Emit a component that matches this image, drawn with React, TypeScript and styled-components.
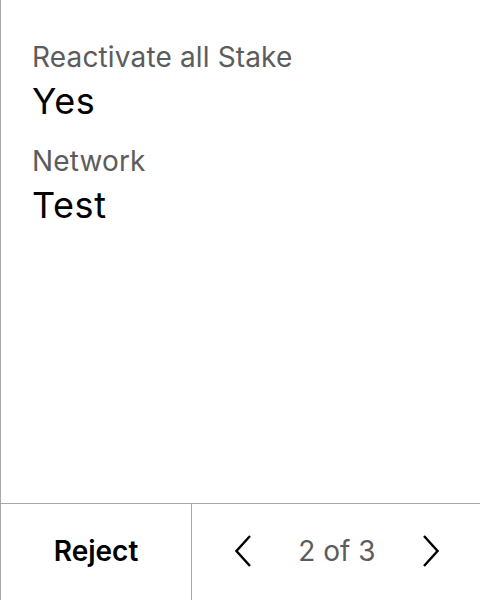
import React from "react";
import styled, { createGlobalStyle } from "styled-components";

const Global = createGlobalStyle`
  html, body { margin: 0; padding: 0; background: #fff; }
  body { font-family: Inter, "Noto Sans", sans-serif; }
`;

const Screen = styled.div`
  width: 480px;
  height: 600px;
  box-sizing: border-box;
  border-left: 1px solid #a8a8a8;
  display: flex;
  flex-direction: column;
  background: #fff;
`;

const Content = styled.div`
  flex: 1;
  padding: 39px 0 0 31px;
  display: flex;
  flex-direction: column;
  gap: 20px;
`;

const Field = styled.div`
  display: flex;
  flex-direction: column;
  gap: 4px;
`;

const Label = styled.div`
  font-size: 28px;
  line-height: 36px;
  letter-spacing: 0.15px;
  color: #5c5c5c;
`;

const Value = styled.div`
  font-size: 36px;
  line-height: 44px;
  letter-spacing: 0.6px;
  color: #000;
`;

const Footer = styled.div`
  height: 96px;
  border-top: 1px solid #a8a8a8;
  display: grid;
  grid-template-columns: 191px 1fr;
`;

const RejectButton = styled.button`
  border: none;
  border-right: 1px solid #a8a8a8;
  background: none;
  font-family: inherit;
  font-size: 28px;
  font-weight: 600;
  color: #000;
  padding: 0 0 2px 0;
`;

const Pager = styled.div`
  display: flex;
  align-items: center;
  justify-content: space-between;
  padding: 0 41px 2px 43px;
`;

const Arrow = styled.button`
  border: none;
  background: none;
  padding: 0;
  width: 16px;
  height: 32px;
  display: flex;
`;

const PageText = styled.span`
  font-size: 28px;
  color: #5c5c5c;
`;

const Chevron = ({ dir }: { dir: "left" | "right" }) => (
  <svg width="16" height="32" viewBox="0 0 16 32" fill="none">
    <path
      d={dir === "left" ? "M15 1 L1.5 16 L15 31" : "M1 1 L14.5 16 L1 31"}
      stroke="#000"
      strokeWidth="2.4"
    />
  </svg>
);

export default function App() {
  return (
    <>
      <Global />
      <Screen>
        <Content>
          <Field>
            <Label>Reactivate all Stake</Label>
            <Value>Yes</Value>
          </Field>
          <Field>
            <Label>Network</Label>
            <Value>Test</Value>
          </Field>
        </Content>
        <Footer>
          <RejectButton>Reject</RejectButton>
          <Pager>
            <Arrow><Chevron dir="left" /></Arrow>
            <PageText>2 of 3</PageText>
            <Arrow><Chevron dir="right" /></Arrow>
          </Pager>
        </Footer>
      </Screen>
    </>
  );
}
